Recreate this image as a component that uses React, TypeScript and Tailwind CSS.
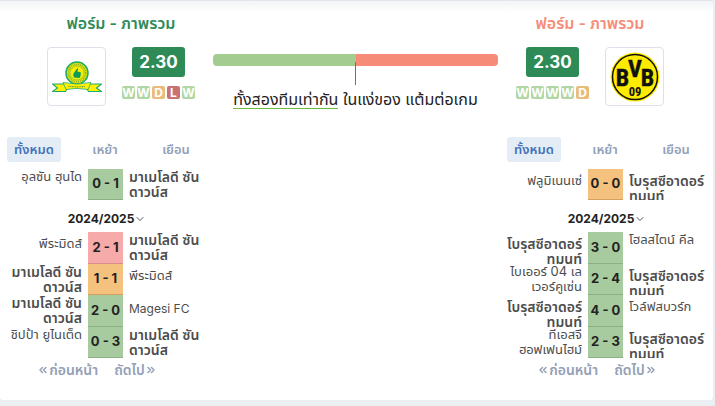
import { useState } from "react";
import { ChevronDown, ChevronsLeft, ChevronsRight } from "lucide-react";

type Outcome = "W" | "D" | "L";

type Match = {
  home: string;
  away: string;
  score: string;
  outcome: Outcome;
  side: "home" | "away";
};

const SUNDOWNS = "มาเมโลดี ซัน\nดาวน์ส";
const DORTMUND = "โบรุสซีอาดอร์\nทมุนท์";

const pillColors: Record<Outcome, string> = {
  W: "bg-[#b3d7a4]",
  D: "bg-[#e8bc7a]",
  L: "bg-[#c87274]",
};

const scoreColors: Record<Outcome, string> = {
  W: "bg-[#a7cb9e] border-[#8cb083]",
  D: "bg-[#f5c17e] border-[#d3a263]",
  L: "bg-[#f6aaa9] border-[#d98e8d]",
};

const teams = [
  {
    id: "sundowns",
    form: ["W", "W", "D", "L", "W"] as Outcome[],
    recent: [
      { home: "อุลซัน ฮุนได", away: SUNDOWNS, score: "0 - 1", outcome: "W", side: "away" },
    ] as Match[],
    season: [
      { home: "พีระมิดส์", away: SUNDOWNS, score: "2 - 1", outcome: "L", side: "away" },
      { home: SUNDOWNS, away: "พีระมิดส์", score: "1 - 1", outcome: "D", side: "home" },
      { home: SUNDOWNS, away: "Magesi FC", score: "2 - 0", outcome: "W", side: "home" },
      { home: "ชิปป้า ยูไนเต็ด", away: SUNDOWNS, score: "0 - 3", outcome: "W", side: "away" },
    ] as Match[],
  },
  {
    id: "dortmund",
    form: ["W", "W", "W", "W", "D"] as Outcome[],
    recent: [
      { home: "ฟลูมิเนนเซ่", away: DORTMUND, score: "0 - 0", outcome: "D", side: "away" },
    ] as Match[],
    season: [
      { home: DORTMUND, away: "โฮลสไตน์ คีล", score: "3 - 0", outcome: "W", side: "home" },
      { home: "ไบเออร์ 04 เล\nเวอร์คูเซ่น", away: DORTMUND, score: "2 - 4", outcome: "W", side: "away" },
      { home: DORTMUND, away: "โวล์ฟสบวร์ก", score: "4 - 0", outcome: "W", side: "home" },
      { home: "ทีเอสจี\nฮอฟเฟนไฮม์", away: DORTMUND, score: "2 - 3", outcome: "W", side: "away" },
    ] as Match[],
  },
];

function SundownsLogo() {
  return (
    <svg viewBox="0 0 52 34" className="w-[52px]" role="img" aria-label="Sundowns">
      <circle cx="26" cy="13" r="11" fill="#efee08" stroke="#1faa62" strokeWidth="1.500" />
      <circle cx="26" cy="13" r="8.700" fill="none" stroke="#93b524" strokeWidth="1.800" strokeDasharray="1.200 .7" />
      <circle cx="26" cy="13" r="7" fill="#f8ee08" stroke="#8cbd2c" strokeWidth=".8" />
      <path d="M23 17.500c-1-2-1-4 .5-5.500l3-4 .6.8-.6 3 3 .2c.7 2 .3 4-1 6z" fill="#0d9a58" />
      <path d="M1.500 24H14l3.500 2.500-3 5H1.500L6.500 28zM50.500 24H38l-3.500 2.500 3 5h13L45.500 28z" fill="#fdf000" stroke="#1faa72" strokeWidth="1.100" strokeLinejoin="round" />
      <path d="M12 22.500q14 3 28 0l-3 7q-11-2.200-22 0z" fill="#fdf000" stroke="#1faa72" strokeWidth=".8" />
      <path d="M17.500 26.300q8.500 1 17 0" fill="none" stroke="#5f9f35" strokeWidth="1.200" strokeDasharray="1 .7" />
    </svg>
  );
}

function DortmundLogo() {
  return (
    <svg viewBox="0 0 50 50" className="w-[50px]" role="img" aria-label="Dortmund">
      <circle cx="25" cy="25" r="24.500" fill="#fdec00" />
      <circle cx="25" cy="25" r="22.500" fill="none" stroke="#101010" strokeWidth="1.500" />
      <g
        fill="#101010"
        stroke="#101010"
        strokeWidth=".4"
        fontFamily="'Liberation Sans Narrow', 'Roboto Condensed', Roboto, sans-serif"
        fontWeight="700"
        textAnchor="middle"
      >
        <text x="12.500" y="34" fontSize="24">B</text>
        <text x="25" y="24.500" fontSize="24">V</text>
        <text x="37.500" y="34" fontSize="24">B</text>
        <text x="25" y="44" fontSize="12.500" strokeWidth="0">09</text>
      </g>
    </svg>
  );
}

function FormSummary({ form, reversed }: { form: Outcome[]; reversed?: boolean }) {
  return (
    <section className={reversed ? "text-[#f68c78]" : "text-[#2e8b57]"}>
      <h2 className="text-center text-base leading-5 font-semibold">ฟอร์ม - ภาพรวม</h2>
      <div className={`mt-3.5 flex gap-4 ${reversed ? "flex-row-reverse" : ""}`}>
        <div className="flex size-[59px] shrink-0 items-center justify-center rounded border border-[#dfe0ea]">
          {reversed ? <DortmundLogo /> : <SundownsLogo />}
        </div>
        <div className="flex flex-col items-center">
          <div className="rounded-[3px] bg-[#2e8b57] px-[7px] text-[17px] leading-[30px] font-bold text-white">2.30</div>
          <ul className="mt-[9px] flex gap-0.5">
            {form.map((r, i) => (
              <li
                key={i}
                className={`flex size-[13px] justify-center overflow-hidden rounded-[2px] text-xs leading-[13px] font-bold text-white ${pillColors[r]}`}
              >
                {r}
              </li>
            ))}
          </ul>
        </div>
      </div>
    </section>
  );
}

function TeamName({ name, bold, right }: { name: string; bold: boolean; right?: boolean }) {
  // names without a space sit a little lower in the row
  const latin = /^[A-Z]/.test(name);
  const lowered = !name.includes(" ") && !name.startsWith("ทีเอสจี");
  const size = bold ? "text-sm font-semibold" : latin ? "text-xs" : "text-[13px]";
  return (
    <span
      className={`overflow-hidden whitespace-pre text-[#4d4d4d] ${size} leading-[15px] ${right ? "" : "text-right"} ${
        latin ? "pt-1.5" : lowered ? "pt-1" : ""
      }`}
    >
      {name}
    </span>
  );
}

function MatchRow({ match }: { match: Match }) {
  return (
    <li className="grid min-h-0 flex-1 grid-cols-[77px_35px_1fr] gap-x-1.5 overflow-hidden">
      <TeamName name={match.home} bold={match.side === "home"} />
      <a
        href="#match"
        className={`flex items-center justify-center border-b text-[13px] font-bold whitespace-nowrap text-[#222] ${scoreColors[match.outcome]}`}
      >
        {match.score}
      </a>
      <TeamName name={match.away} bold={match.side === "away"} right />
    </li>
  );
}

function TeamMatches({ recent, season }: { recent: Match[]; season: Match[] }) {
  const [tab, setTab] = useState("ทั้งหมด");

  return (
    <section className="w-[208px]">
      <div className="flex gap-[17px] pl-0.5">
        {["ทั้งหมด", "เหย้า", "เยือน"].map((label) => (
          <button
            key={label}
            type="button"
            onClick={() => setTab(label)}
            className={`h-[25px] w-[54px] rounded-[3px] text-[13px] font-semibold ${
              tab === label ? "bg-[#e4ecf6] text-[#4472b8]" : "text-[#94a0b8]"
            }`}
          >
            {label}
          </button>
        ))}
      </div>
      <ul className="mt-[7px] flex h-[31px] flex-col">
        {recent.map((m, i) => (
          <MatchRow key={i} match={m} />
        ))}
      </ul>
      <button type="button" className="flex h-8 w-full items-center justify-center pt-1.5 pr-1 text-xs font-bold text-[#222]">
        2024/2025
        <ChevronDown size={12} className="text-gray-600" />
      </button>
      <ul className="flex h-[126px] flex-col">
        {season.map((m, i) => (
          <MatchRow key={i} match={m} />
        ))}
      </ul>
      <nav className="mt-1 flex justify-center gap-4 pr-6 text-sm leading-4 font-semibold text-[#94a0b8]">
        <a href="#prev" className="flex items-center">
          <ChevronsLeft size={12} strokeWidth={3} />
          ก่อนหน้า
        </a>
        <a href="#next" className="flex items-center">
          ถัดไป
          <ChevronsRight size={12} strokeWidth={3} />
        </a>
      </nav>
    </section>
  );
}

export default function App() {
  return (
    <div className="min-h-screen bg-[#ebeff2] pr-0.5 pb-1.5 font-[family-name:Inter,'Noto_Sans_Thai','Noto_Sans',sans-serif]">
      <main className="rounded-b border-t border-[#e4e5ee] bg-white bg-linear-to-b from-[#f3f4f6] to-white to-[12px] pb-[22px]">
        <div className="flex justify-between pt-3 pr-[49px] pl-[47px]">
          <FormSummary form={teams[0].form} />
          <div className="mx-[18px] mt-[41px] min-w-0 flex-1">
            <div className="flex h-3 overflow-hidden rounded">
              <div className="flex-1 bg-[#a3cc91]" />
              <div className="flex-1 bg-[#f68c78]" />
            </div>
            <div className="relative mx-auto -mt-1 h-[23px] w-px bg-gray-500" />
            <p className="mt-1 text-center text-base leading-5 whitespace-nowrap text-[#222]">
              <span className="inline-block bg-linear-to-t from-[#6cbb3c] from-[1px] to-transparent to-[1px]">
                ทั้งสองทีมเท่ากัน
              </span>{" "}
              ในแง่ของ แต้มต่อเกม
            </p>
          </div>
          <FormSummary form={teams[1].form} reversed />
        </div>
        <div className="mt-7 flex justify-between pl-[5px]">
          {teams.map((t) => (
            <TeamMatches key={t.id} recent={t.recent} season={t.season} />
          ))}
        </div>
      </main>
    </div>
  );
}
